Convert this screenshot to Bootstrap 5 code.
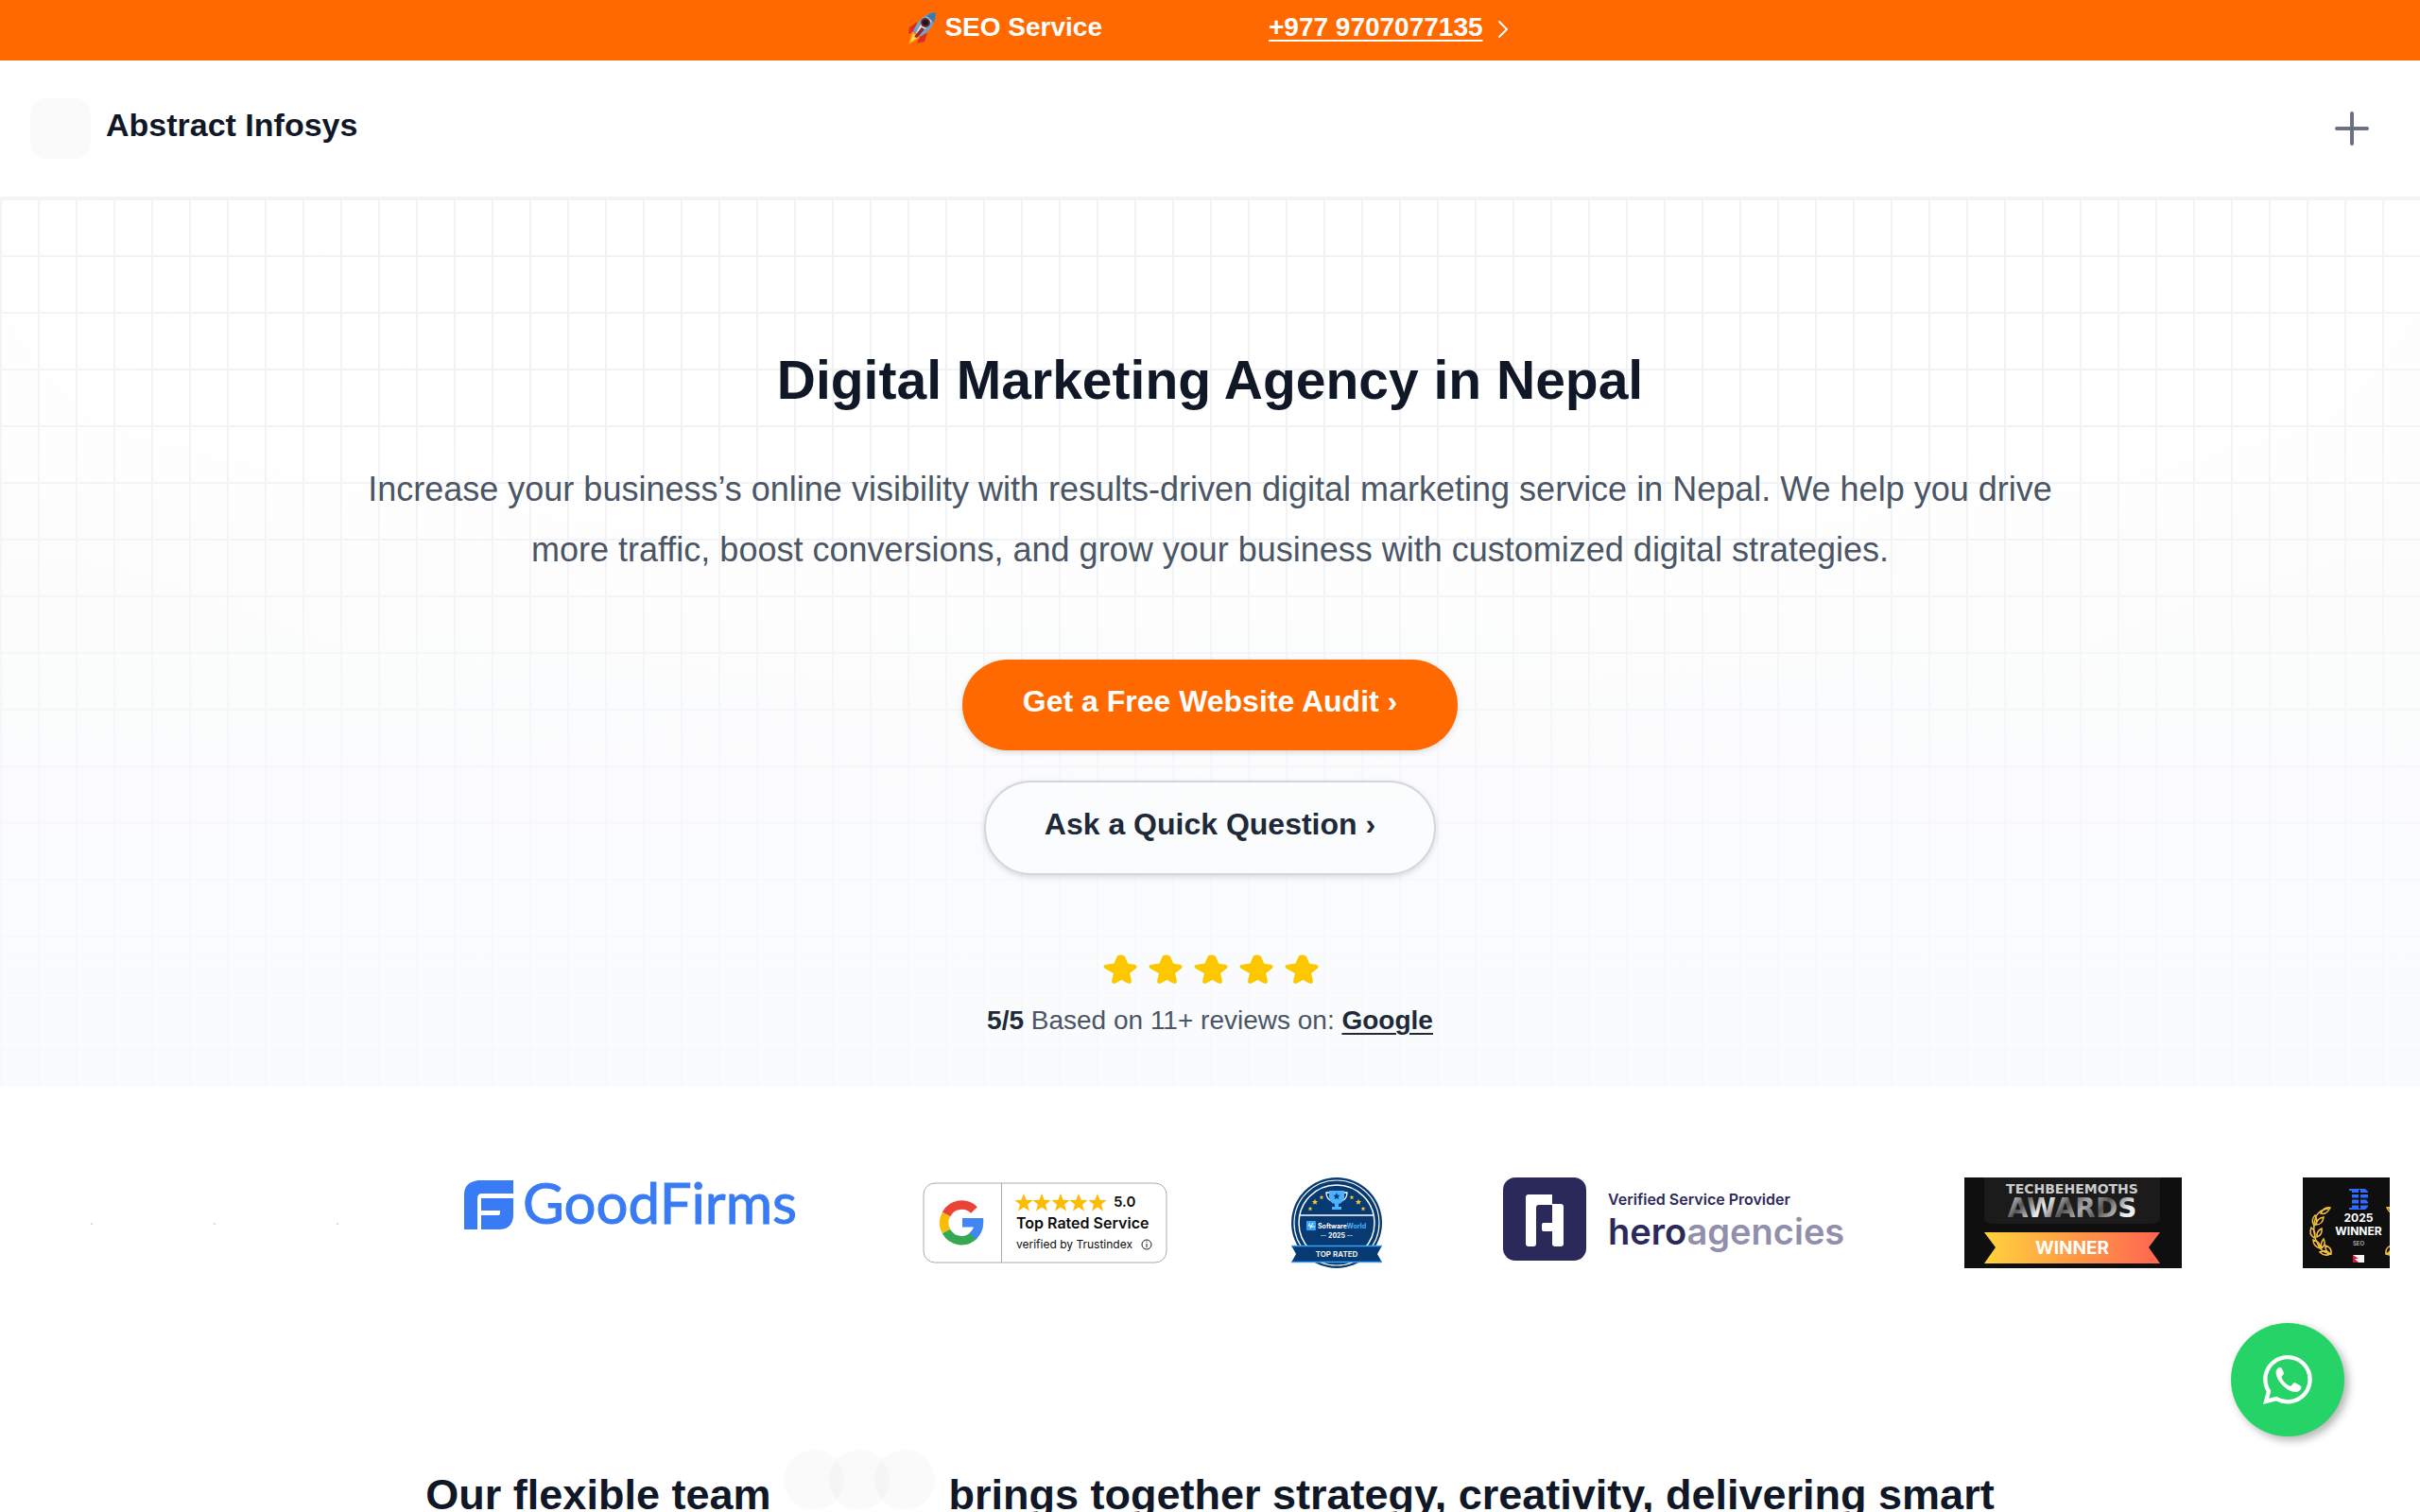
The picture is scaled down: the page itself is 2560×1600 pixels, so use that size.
<!DOCTYPE html>
<html lang="en">
<head>
<meta charset="utf-8">
<meta name="viewport" content="width=device-width, initial-scale=1">
<title>Digital Marketing Agency in Nepal | Abstract Infosys</title>
<link href="https://cdn.jsdelivr.net/npm/bootstrap@5.3.0/dist/css/bootstrap.min.css" rel="stylesheet">
<style>
  :root { --brand: #ff6900; --ink: #101828; --ink-soft: #1e2939; --muted: #4a5565; }
  body { font-family: "Liberation Sans", Arial, sans-serif; color: var(--ink); background: #fff; overflow-x: hidden; }
  svg { display: block; flex-shrink: 0; overflow: visible; }
  .promo-bar { background: var(--brand); height: 64px; gap: 176px; padding: 0 6px 6px 0; font-size: 28px; line-height: 40px; font-weight: 700; color: #fff; }
  .promo-bar a { color: #fff; text-underline-offset: 4px; text-decoration-thickness: 2px; }
  .site-header { height: 146px; padding: 0 32px; border-bottom: 2px solid #f3f4f6; }
  .site-name { font-size: 34px; line-height: 48px; font-weight: 700; color: var(--ink); text-decoration: none; gap: 16px; }
  .site-name span { padding-bottom: 8px; }
  .logo-slot { width: 64px; height: 64px; border-radius: 16px; background: #fafafa; }
  .menu-toggle { padding: 16px; margin-right: 4px; color: #6b7280; }
  .hero-area { padding: 152px 32px 50px;
    background:
      linear-gradient(rgba(249,250,252,0) 25%, rgba(249,250,252,.65) 75%, rgba(249,250,252,.75)),
      radial-gradient(ellipse 60% 70% at 50% 0, rgba(250,251,252,0) 60%, rgba(249,250,251,.35)),
      linear-gradient(90deg, #f1f2f4 2px, transparent 2px) 0 0 / 40px 60px,
      linear-gradient(#f1f2f4 2px, transparent 2px) 0 0 / 40px 60px,
      #fff; }
  .hero-title { font-size: 57px; line-height: 80px; font-weight: 700; margin-bottom: 44px; }
  .hero-copy { font-size: 36px; line-height: 64px; color: var(--muted); max-width: 1792px; margin-bottom: 84px; }
  .cta-stack { gap: 32px; }
  .pill { --bs-btn-font-size: 32px; --bs-btn-line-height: 48px; --bs-btn-font-weight: 700; --bs-btn-border-radius: 50px; padding: 20px 64px 28px; border: 0; box-shadow: 0 2px 6px rgba(0,0,0,.14); }
  .pill-solid, .pill-solid:hover { background: var(--brand); color: #fff; }
  .pill-line, .pill-line:hover { border: 2px solid #d1d5dc; color: var(--ink-soft); background: rgba(252,253,254,.6); padding-left: 62px; padding-right: 62px; }
  .stars-row { gap: 8px; margin-top: 80px; margin-bottom: 14px; }
  .review-line { font-size: 28px; line-height: 40px; color: var(--muted); }
  .review-line strong, .review-line a { color: var(--ink-soft); font-weight: 700; text-underline-offset: 4px; text-decoration-thickness: 2px; }
  .logo-strip { margin: 0 32px; padding: 96px 64px 0; gap: 128px; overflow: hidden; height: 194px; }
  .dot-slot { width: 2px; height: 2px; margin-top: 48px; background: #d8dadd; flex-shrink: 0; }
  .team-title { font-size: 45px; line-height: 64px; font-weight: 700; padding-top: 190px; gap: 14px; }
  .avatars { padding-bottom: 16px; }
  .avatars i { width: 64px; height: 64px; border-radius: 50%; background: rgba(0,0,0,.02); }
  .avatars i + i { margin-left: -16px; }
  .chat-fab { right: 80px; bottom: 80px; width: 120px; height: 120px; background: #25d366; box-shadow: 4px 4px 10px rgba(0,0,0,.3); }
  .lato { font-family: Lato, sans-serif; }
  .inter { font-family: Inter, sans-serif; }
  .wide-face { font-family: "DejaVu Sans", sans-serif; font-weight: 700; }
</style>
</head>
<body>
<svg width="0" height="0" class="position-absolute" aria-hidden="true">
  <defs>
    <path id="star" d="M18 5.500Q19 4.500 22 4.500T26 6L29 13.500 37 15Q40 16.500 37.500 19L31 24 33 32Q33 35 30 35L22.500 31 15 35Q12 35 12 32L14 24 5 19Q2 16.500 5 15L14.500 13.500Z"/>
    <path id="point" d="M0-10 2.6-3.2 9.6-3 4 1.4 6 8.4 0 4.4-6 8.4-4 1.4-9.6-3-2.6-3.2Z"/>
  </defs>
</svg>

<div class="promo-bar d-flex justify-content-center align-items-center">
  <div class="d-flex align-items-center gap-2">
    <svg width="32" height="40" viewBox="0 0 32 40" role="img" aria-label="Rocket">
      <path d="M11 14 3 20l-1 7 8-3zM22 26l-3 9-8 2 3-9z" fill="#dd2e20"/>
      <path d="M6 24 2 38l12-7z" fill="#ff9a1f"/><path d="M7 27 4 36l8-6z" fill="#ffe14a"/>
      <path d="M31 4C21 4 12 12 7 24l7 6C24 25 31 16 31 4z" fill="#6fa3c7"/>
      <path d="M31 4C24 5 15 14 10 26l2 2C22 20 29 12 31 4z" fill="#c8dfec"/>
      <path d="M31 4c-4 0-8 2-10 4l8 7c1-3 2-7 2-11z" fill="#3f79a8"/>
      <circle cx="20" cy="15" r="5" fill="#7b2020"/><circle cx="20" cy="15" r="3" fill="#15182a"/>
      <path d="m16 20-8 10 3 1 8-9z" fill="#a32020"/>
    </svg>
    <span>SEO Service</span>
  </div>
  <div class="d-flex align-items-center">
    <a href="tel:+9779707077135">+977 9707077135</a>
    <svg class="ms-3 mt-1" width="10" height="18" viewBox="0 0 10 18" fill="none" stroke="#fff" stroke-width="2" stroke-linecap="round" stroke-linejoin="round" aria-hidden="true"><path d="m1 1 8 8-8 8"/></svg>
  </div>
</div>

<header class="site-header d-flex justify-content-between align-items-center">
  <a class="site-name d-flex align-items-center" href="#"><i class="logo-slot"></i><span>Abstract Infosys</span></a>
  <button class="menu-toggle btn border-0" type="button" aria-label="Open menu">
    <svg width="40" height="40" viewBox="0 0 40 40" stroke="currentColor" stroke-width="4" stroke-linecap="round"><path d="M20 4v32M4 20h32"/></svg>
  </button>
</header>

<main>
  <section class="hero-area d-flex flex-column align-items-center text-center">
    <h1 class="hero-title">Digital Marketing Agency in Nepal</h1>
    <p class="hero-copy">Increase your business’s online visibility with results-driven digital marketing service in Nepal. We help you drive more traffic, boost conversions, and grow your business with customized digital strategies.</p>
    <div class="cta-stack d-flex flex-column align-items-center">
      <a class="btn pill pill-solid" href="#audit">Get a Free Website Audit ›</a>
      <a class="btn pill pill-line" href="#question">Ask a Quick Question ›</a>
    </div>
    <div class="stars-row d-flex" role="img" aria-label="5 out of 5 stars">
      <svg width="40" height="40" viewBox="0 0 40 40" fill="#fdc700"><use href="#star"/></svg>
      <svg width="40" height="40" viewBox="0 0 40 40" fill="#fdc700"><use href="#star"/></svg>
      <svg width="40" height="40" viewBox="0 0 40 40" fill="#fdc700"><use href="#star"/></svg>
      <svg width="40" height="40" viewBox="0 0 40 40" fill="#fdc700"><use href="#star"/></svg>
      <svg width="40" height="40" viewBox="0 0 40 40" fill="#fdc700"><use href="#star"/></svg>
    </div>
    <p class="review-line mb-0"><strong>5/5</strong> Based on 11+ reviews on: <a href="#reviews">Google</a></p>
  </section>

  <section class="logo-strip d-flex align-items-start" aria-label="Awards and partners">
    <i class="dot-slot"></i><i class="dot-slot"></i><i class="dot-slot"></i>

    <svg width="362" height="96" viewBox="0 0 362 96" role="img" aria-label="GoodFirms">
      <g fill="#397bf5">
        <path d="M20 3h37v14H24q-5 0-5 5v33H5V18Q5 5 20 3z"/>
        <path d="M23 22h34v17q0 15-14 16H23V40h18q2 0 2-2v-3H23z"/>
        <text class="lato" x="67" y="49" font-size="60" font-weight="400" stroke="#397bf5" stroke-width="1">GoodFirms</text>
      </g>
    </svg>

    <svg width="262" height="96" viewBox="0 0 262 96" role="img" aria-label="Top Rated Service, verified by Trustindex">
      <rect x="1" y="6" width="257" height="84" rx="12" fill="#fff" stroke="#aaa"/>
      <path d="M83.500 6v84" stroke="#aaa"/>
      <g fill="none" stroke-width="9.500">
        <path d="M54.500 34.500A18.500 18.500 0 0 0 25 39" stroke="#ea4335"/>
        <path d="M25 39a18.500 18.500 0 0 0 0 18" stroke="#fbbc05"/>
        <path d="M25 57a18.500 18.500 0 0 0 29.500 4" stroke="#34a853"/>
        <path d="M53 62A18.500 18.500 0 0 0 59.500 47.800H42" stroke="#4285f4"/>
      </g>
      <g fill="#fbbc05">
        <use href="#point" x="107" y="27"/><use href="#point" x="126" y="27"/><use href="#point" x="146" y="27"/><use href="#point" x="165" y="27"/><use href="#point" x="185" y="27"/>
      </g>
      <g class="inter" fill="#0b0b0b">
        <text x="202" y="31" font-size="15" font-weight="600">5.0</text>
        <text x="99" y="54" font-size="16" font-weight="600">Top Rated Service</text>
        <text x="99" y="75" font-size="12">verified by Trustindex</text>
      </g>
      <circle cx="237" cy="71" r="5" fill="none" stroke="#222"/><path d="M237 70v4M237 67.500v1.200" stroke="#222"/>
    </svg>

    <svg width="96" height="96" viewBox="0 0 96 96" role="img" aria-label="SoftwareWorld 2025 Top Rated">
      <circle cx="48" cy="48" r="48" fill="#073a72"/>
      <circle cx="48" cy="48" r="45" fill="none" stroke="#fff" stroke-width="1.200"/>
      <circle cx="48" cy="48" r="40" fill="none" stroke="#fff" stroke-width="1.500"/>
      <path d="M9 40h78" stroke="#fff" stroke-width="1.300"/>
      <g fill="none" stroke="#fff" stroke-width="1.300"><path d="M41 16h-4q0 7 6 9M55 16h4q0 7-6 9"/></g>
      <path d="M40 14h16v7q-1 6-6 7v3h3v3h-10v-3h3v-3q-5-1-6-7z" fill="#4db1ff"/>
      <use href="#point" transform="translate(48 20) scale(.4)" fill="#073a72"/>
      <g fill="#ffc928">
        <use href="#point" transform="translate(20 33) scale(.26)"/><use href="#point" transform="translate(25 26) scale(.34)"/><use href="#point" transform="translate(32 21) scale(.26)"/>
        <use href="#point" transform="translate(64 21) scale(.26)"/><use href="#point" transform="translate(71 26) scale(.34)"/><use href="#point" transform="translate(76 33) scale(.26)"/>
      </g>
      <rect x="16" y="46" width="10" height="10" rx="1" fill="#35a4f8"/><path d="m20 48-2 3h3l-1 3M23 48l-2 4h4" stroke="#fff" fill="none"/>
      <g class="inter" font-weight="700">
        <text x="28" y="54" font-size="7" fill="#fff">Software<tspan fill="#4db1ff">World</tspan></text>
        <text x="48" y="64" font-size="7" fill="#fff" text-anchor="middle">2025</text>
      </g>
      <path d="M31 61.500h6M59 61.500h6" stroke="#9bc4e6" stroke-width=".8"/>
      <path d="M0 72h96l-5 9 5 9H0l5-9z" fill="#073a72"/><path d="M0 72.500h96M0 89.500h96" stroke="#35a4f8" stroke-width="1.500"/>
      <text class="inter" x="48" y="84" font-size="8" font-weight="600" fill="#fff" text-anchor="middle">TOP RATED</text>
    </svg>

    <svg width="360" height="96" viewBox="0 0 360 96" role="img" aria-label="heroagencies, Verified Service Provider">
      <rect width="88" height="88" rx="13" fill="#2b285a"/>
      <path d="M27 18h25v10h9q3 0 3 3v39q0 3-3 3h-6q-3 0-3-3V57h-9q-2 0-2-2v-5q0-2 2-2h9V29H38q-3 0-3 3v38q0 3-3 3h-5q-3 0-3-3V21q0-3 3-3z" fill="#fff"/>
      <g class="inter">
        <text x="111" y="29" font-size="16" font-weight="600" fill="#2b285a">Verified Service Provider</text>
        <text x="111" y="71" font-size="38" font-weight="600" fill="#2b285a">hero<tspan fill="#918fab">agencies</tspan></text>
      </g>
    </svg>

    <svg width="230" height="96" viewBox="0 0 230 96" role="img" aria-label="TechBehemoths Awards Winner">
      <defs>
        <linearGradient id="silver" x1="0" x2="1" y2=".2"><stop stop-color="#fff"/><stop offset=".18" stop-color="#555"/><stop offset=".35" stop-color="#eee"/><stop offset=".52" stop-color="#555"/><stop offset=".65" stop-color="#aaa"/><stop offset=".8" stop-color="#555"/><stop offset="1" stop-color="#eee"/></linearGradient>
        <linearGradient id="sunset"><stop stop-color="#ffd23c"/><stop offset="1" stop-color="#ff6450"/></linearGradient>
      </defs>
      <rect width="230" height="96" fill="#0f0f0f"/>
      <path d="M21 0h186v41q0 8-8 8H29q-8 0-8-8z" fill="#1b1b1b"/>
      <g text-anchor="middle">
        <text class="wide-face" x="114" y="17" font-size="14" fill="#ccc">TECHBEHEMOTHS</text>
        <text class="wide-face" x="114" y="42" font-size="28" fill="url(#silver)">AWARDS</text>
        <path d="M21 58h186l-12 16 12 17H21l12-17z" fill="url(#sunset)"/>
        <text class="inter" x="114" y="81" font-size="19" font-weight="700" fill="#fff">WINNER</text>
      </g>
    </svg>

    <svg width="118" height="96" viewBox="0 0 118 96" role="img" aria-label="2025 Winner SEO">
      <rect width="118" height="96" fill="#0f0f0f"/>
      <path d="M49 12h17l3 3v7l-2 2 2 2v5l-3 3H49v-2h3V14h-3z" fill="#2f6bff"/>
      <path d="M49 17h20M49 22.500h20M49 28.500h20M60 13v20" stroke="#0f0f0f" stroke-width="2"/>
      <g class="inter" text-anchor="middle" fill="#fff" font-weight="700">
        <text x="59" y="47" font-size="12">2025</text><text x="59" y="61" font-size="12">WINNER</text>
        <text x="59" y="72" font-size="6" font-weight="500" fill="#ccc">SEO</text>
      </g>
      <g id="laurel" fill="none" stroke="#f5bf3e" stroke-width="1.500">
        <path d="M27 33q-9 1-13 8M14 41q-6 16 3 32 4 7 13 8"/>
        <path d="M29 32q-7-1-10 6 6 2 10-6zM13 40q-5 5-1 11 5-4 1-11zM22 42q-7 1-8 8 7 0 8-8zM9 53q-3 7 3 11 3-6-3-11zM20 54q-6 3-5 9 6-2 5-9zM11 66q0 7 7 9 1-7-7-9zM22 65q-4 5-2 10 5-4 2-10zM18 79q5 5 11 2-4-5-11-2zM24 72q-1 6 6 9 1-7-6-9z"/>
      </g>
      <use href="#laurel" transform="matrix(-1 0 0 1 118 0)"/>
      <rect x="53" y="82" width="12" height="8" fill="#f4f4f4"/><path d="m53 82 6 4h-4l4 4h-6z" fill="#dc143c"/>
    </svg>
  </section>

  <h2 class="team-title d-flex justify-content-center align-items-end mb-0">
    <span>Our flexible team</span>
    <span class="avatars d-flex"><i></i><i></i><i></i></span>
    <span>brings together strategy, creativity, delivering smart</span>
  </h2>
</main>

<a class="chat-fab position-fixed rounded-circle d-flex justify-content-center align-items-center" href="#chat" aria-label="Chat on WhatsApp">
  <svg width="52" height="52" viewBox="0 0 16 16" fill="#fff"><path d="M13.601 2.326A7.854 7.854 0 0 0 7.994 0C3.627 0 .068 3.558.064 7.926c0 1.399.366 2.760 1.057 3.965L0 16l4.204-1.102a7.933 7.933 0 0 0 3.790.965h.004c4.368 0 7.926-3.558 7.930-7.930A7.898 7.898 0 0 0 13.600 2.326zM7.994 14.521a6.573 6.573 0 0 1-3.356-.920l-.240-.144-2.494.654.666-2.433-.156-.251a6.560 6.560 0 0 1-1.007-3.505c0-3.626 2.957-6.584 6.591-6.584a6.560 6.560 0 0 1 4.660 1.931 6.557 6.557 0 0 1 1.928 4.660c-.004 3.639-2.961 6.592-6.592 6.592z"/><path d="M5.300 4c-.5.100-1.200.800-1.100 1.800.1 1.500 1.100 3 2.300 4.200 1.100 1.100 2.600 2 4.100 2 .9 0 1.700-.6 1.800-1.300.1-.4 0-.6-.3-.8l-1.500-.8c-.4-.2-.7-.1-.9.2l-.5.600c-.2.200-.4.200-.7.100C7.500 9.500 6.500 8.400 6.100 7.500c-.1-.3-.1-.5.100-.7l.4-.5c.2-.2.2-.4.100-.7l-.6-1.300C5.900 4 5.600 3.900 5.300 4z"/></svg>
</a>
<script src="https://cdn.jsdelivr.net/npm/bootstrap@5.3.0/dist/js/bootstrap.bundle.min.js"></script>
</body>
</html>
